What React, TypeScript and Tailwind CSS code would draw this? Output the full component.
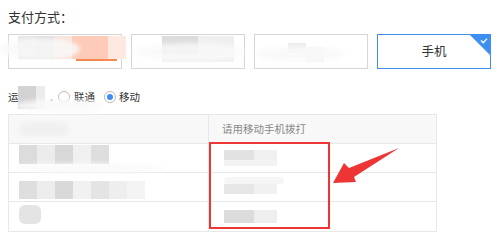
import React from "react";

const font = { fontFamily: '"Noto Sans CJK SC", "Noto Sans", sans-serif' };

function Mosaic({ cells, h, w = 18 }: { cells: string[]; h: number; w?: number }) {
  return (
    <div className="flex shrink-0">
      {cells.map((c, i) => (
        <div key={i} style={{ background: c, width: w, height: h }} />
      ))}
    </div>
  );
}

export default function App() {
  return (
    <div className="relative w-[500px] h-[241px] bg-white overflow-hidden" style={font}>
      <div className="pl-[8px] pt-[8px]">
        <div className="text-[13px] leading-[17px] text-[#333] h-[17px]">支付方式：</div>

        <div className="flex gap-[9px] mt-[9px]">
          <div className="w-[114px] h-[35px] border border-[#d6d6d6] pl-[9px] pt-[1px]">
            <div className="flex flex-col">
              <div className="flex items-end">
                <Mosaic cells={["#e4e4e4", "#dcdcdc", "#f8e2da", "#fdcbb8", "#fdcbb8", "#fde9e2"]} h={23} />
              </div>
              <div className="ml-[58px] w-[41px] h-[2px] bg-[#f5894f]" />
            </div>
          </div>
          <div className="w-[114px] h-[35px] border border-[#d6d6d6] pl-[30px] pt-[1px]">
            <Mosaic cells={["#dcdcdc", "#dcdcdc", "#efefef", "#efefef"]} h={18} />
            <div className="w-[72px] h-[8px] bg-[#f1f1f1]" />
          </div>
          <div className="w-[114px] h-[35px] border border-[#d6d6d6] pl-[33px] pt-[8px]">
            <div className="flex items-start">
              <div className="w-[18px] h-[10px] bg-[#ebebeb]" />
              <div className="w-[18px] h-[15px] mt-[4px] bg-[#f3f3f3]" />
            </div>
          </div>
          <div className="relative w-[114px] h-[35px] border border-[#3c8ff0] flex items-center justify-center text-[12.5px] text-[#333]">
            手机
            <svg className="absolute right-0 top-0" width="20" height="20" viewBox="0 0 20 20">
              <polygon points="0,0 20,0 20,20" fill="#3c8ff0" />
              <path d="M11 5.5 L13.2 7.8 L17 3.6" stroke="#fff" strokeWidth="1.3" fill="none" />
            </svg>
          </div>
        </div>

        <div className="flex items-center h-[16px] mt-[20px] text-[10.5px] text-[#333]">
          <span className="w-[10px] overflow-hidden">运</span>
          <div className="flex">
            <div className="w-[18px] h-[23px] bg-[#d2d2d2]" />
            <div className="w-[9px] h-[23px] bg-[#ececec]" />
          </div>
          <span className="ml-[5px] w-[4px]">.</span>
          <span className="w-[12px] h-[12px] rounded-full border border-[#bbb] ml-[4px]" />
          <span className="ml-[4px]">联通</span>
          <span className="w-[12px] h-[12px] rounded-full border border-[#bbb] ml-[9px] flex items-center justify-center">
            <span className="w-[6px] h-[6px] rounded-full bg-[#3c8ff0]" />
          </span>
          <span className="ml-[3px]">移动</span>
        </div>

        <div className="mt-[9px] w-[429px] border border-[#e8e8e8] text-[10.5px]">
          <div className="grid grid-cols-[200px_1fr] h-[29px] bg-[#f8f8f8] text-[#888] border-b border-[#e8e8e8]">
            <div className="border-r border-[#e8e8e8] flex items-center pl-[10px]">
              <div className="w-[50px] h-[14px] rounded-full bg-[#f0f0f0] blur-[2px]" />
            </div>
            <div className="flex items-center pl-[13px]">请用移动手机拨打</div>
          </div>

          <div className="grid grid-cols-[200px_1fr] h-[29px] border-b border-[#e8e8e8]">
            <div className="border-r border-[#e8e8e8] pl-[10px] pt-[1px]">
              <Mosaic cells={["#dcdcdc", "#ececec", "#d8d8d8", "#f0f0f0", "#dedede"]} h={19} />
            </div>
            <div className="pl-[15px] pt-[6px]">
              <div className="flex">
                <div className="w-[30px] h-[10px] bg-[#e2e2e2]" />
                <div className="w-[23px] h-[10px] bg-[#f0f0f0]" />
              </div>
              <div className="w-[53px] h-[6px] bg-[#f3f3f3]" />
            </div>
          </div>

          <div className="grid grid-cols-[200px_1fr] h-[29px] border-b border-[#e8e8e8]">
            <div className="border-r border-[#e8e8e8] pl-[10px] pt-[8px]">
              <Mosaic cells={["#dedede", "#ededed", "#d9d9d9", "#f1f1f1", "#e4e4e4", "#eeeeee", "#f4f4f4"]} h={18} />
            </div>
            <div className="pl-[15px] pt-[4px]">
              <div className="w-[60px] h-[7px] bg-[#f6f6f6] rounded" />
              <div className="flex">
                <div className="w-[30px] h-[10px] bg-[#e6e6e6]" />
                <div className="w-[23px] h-[10px] bg-[#f1f1f1]" />
              </div>
            </div>
          </div>

          <div className="grid grid-cols-[200px_1fr] h-[29px]">
            <div className="border-r border-[#e8e8e8] pl-[10px] pt-[3px]">
              <div className="w-[22px] h-[19px] rounded-[6px] bg-[#e4e4e4]" />
            </div>
            <div className="pl-[15px] pt-[8px]">
              <div className="flex">
                <div className="w-[30px] h-[13px] bg-[#dcdcdc]" />
                <div className="w-[23px] h-[13px] bg-[#eeeeee]" />
              </div>
            </div>
          </div>
        </div>
      </div>

      {/* red highlight and arrow drawn over the table */}
      <div className="absolute left-[209px] top-[142px] w-[121px] h-[87px] border-[2.5px] border-[#ee3535]" />
      <svg className="absolute left-0 top-0 pointer-events-none" width="500" height="241" viewBox="0 0 500 241">
        <defs>
          <filter id="sm" x="-20%" y="-50%" width="140%" height="200%">
            <feGaussianBlur stdDeviation="2" />
          </filter>
        </defs>
        <g filter="url(#sm)" fill="#f9f9f9" opacity="0.85">
          <ellipse cx="40" cy="49" rx="40" ry="11" />
          <ellipse cx="190" cy="52" rx="55" ry="9" />
          <ellipse cx="300" cy="54" rx="45" ry="8" />
          <ellipse cx="60" cy="106" rx="45" ry="7" />
          <ellipse cx="90" cy="168" rx="75" ry="5" />
        </g>
        <polygon points="333,183 344,163 349,168 399,148 354,177 356,182" fill="#ee3535" />
      </svg>
    </div>
  );
}
